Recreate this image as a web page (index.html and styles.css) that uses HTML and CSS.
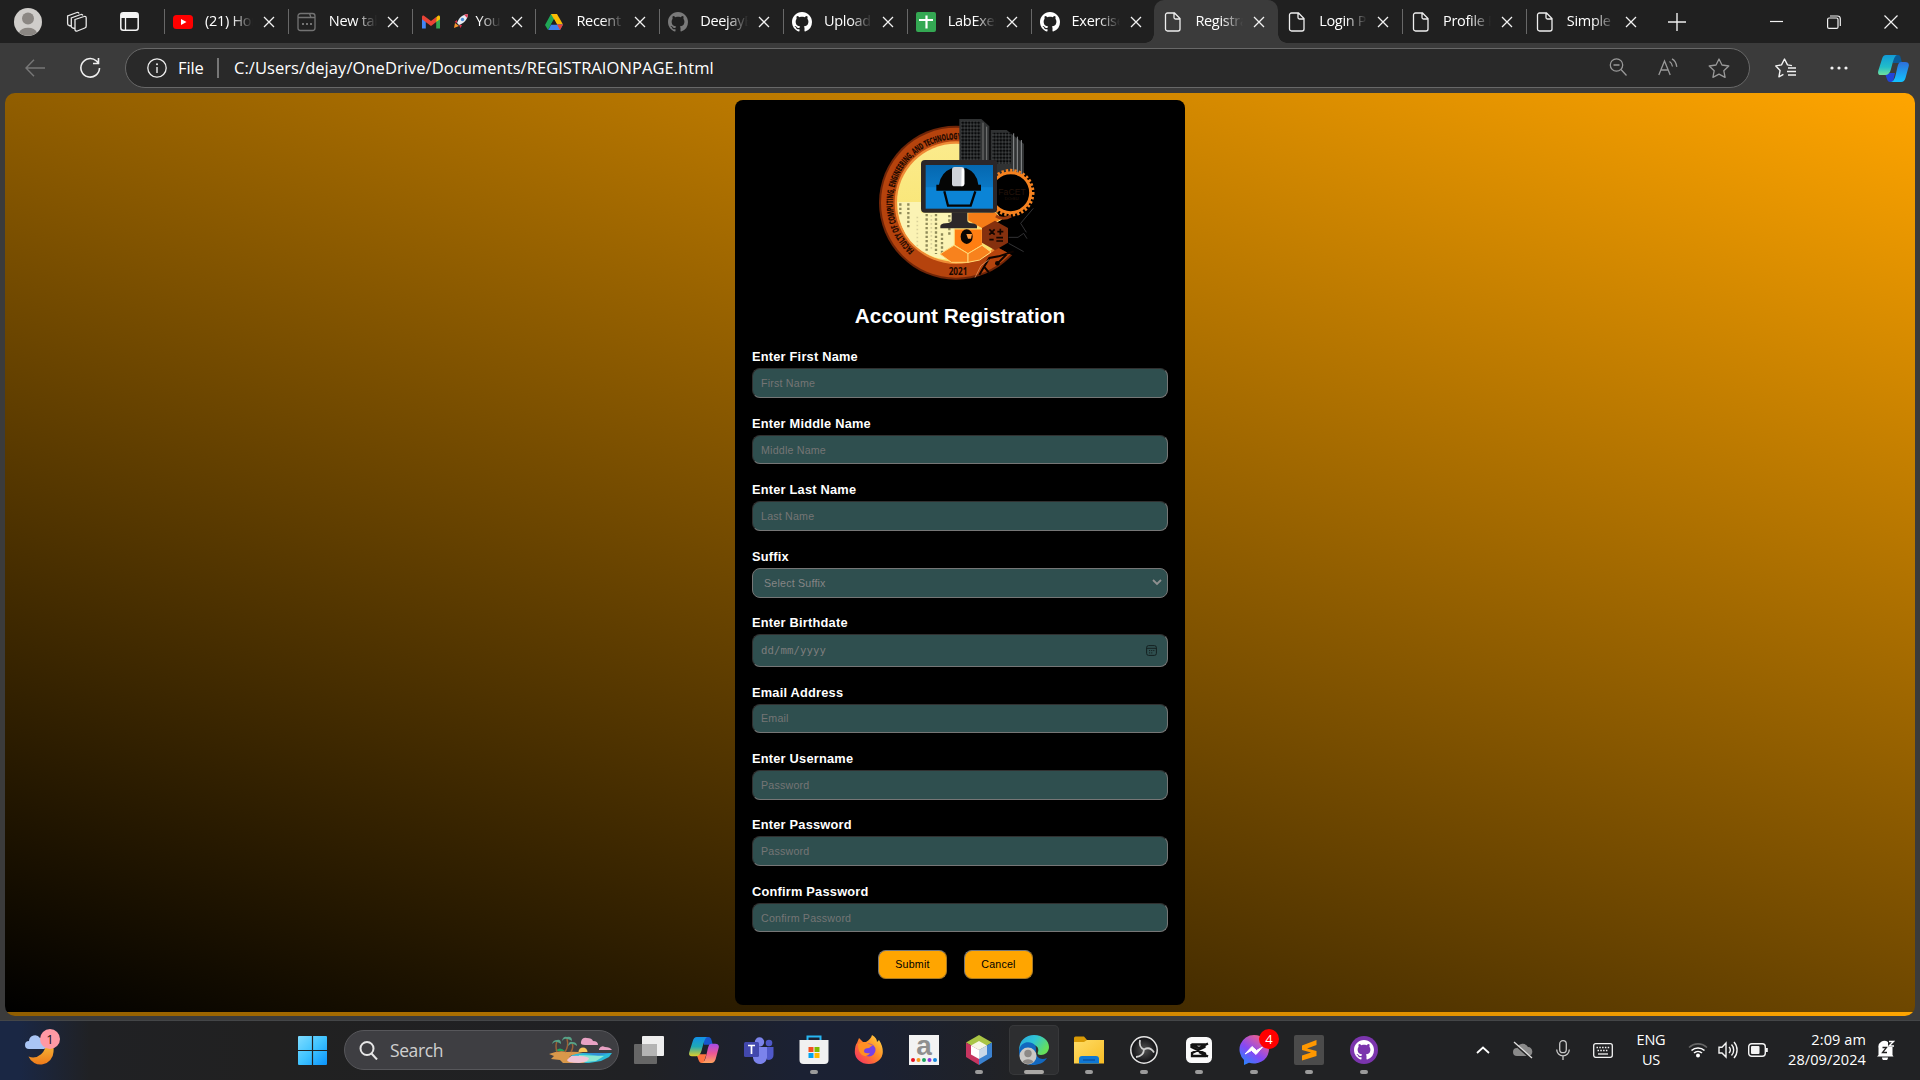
FILE: index.html
```html
<!DOCTYPE html>
<html lang="en">
<head>
<meta charset="utf-8">
<title>Registration</title>
<link rel="stylesheet" href="styles.css">
</head>
<body>
<svg class="defs" width="0" height="0">
  <defs>
    <symbol id="github" viewBox="0 0 16 16"><path d="M8 0C3.58 0 0 3.58 0 8c0 3.54 2.29 6.53 5.47 7.59.4.07.55-.17.55-.38 0-.19-.01-.82-.01-1.49-2.01.37-2.53-.49-2.69-.94-.09-.23-.48-.94-.82-1.13-.28-.15-.68-.52-.01-.53.63-.01 1.08.58 1.23.82.72 1.21 1.87.87 2.33.66.07-.52.28-.87.51-1.07-1.78-.2-3.64-.89-3.64-3.95 0-.87.31-1.59.82-2.15-.08-.2-.36-1.02.08-2.12 0 0 .67-.21 2.2.82.64-.18 1.32-.27 2-.27s1.36.09 2 .27c1.53-1.04 2.2-.82 2.2-.82.44 1.1.16 1.92.08 2.12.51.56.82 1.27.82 2.15 0 3.07-1.87 3.75-3.65 3.95.29.25.54.73.54 1.48 0 1.07-.01 1.93-.01 2.2 0 .21.15.46.55.38A8.01 8.01 0 0 0 16 8c0-4.42-3.58-8-8-8z"/></symbol>
    <symbol id="doc" viewBox="0 0 20 20"><path d="M4.5 1h7L17 6.500V17a2 2 0 0 1-2 2H4.500a2 2 0 0 1-2-2V3a2 2 0 0 1 2-2zM11 1.300V5.500a1.500 1.500 0 0 0 1.500 1.500H17" fill="none" stroke="#eee" stroke-width="1.300"/></symbol>
    <symbol id="x" viewBox="0 0 12 12"><path d="M1 1l10 10M11 1L1 11" fill="none" stroke="#f2f2f2" stroke-width="1.300"/></symbol>
    <linearGradient id="cpA" x1="0" y1="0" x2="0" y2="1"><stop offset="0" stop-color="#128fe8"/><stop offset=".5" stop-color="#1fa9b5"/><stop offset="1" stop-color="#e2cf27"/></linearGradient>
    <linearGradient id="cpB" x1="0" y1="0" x2="0" y2="1"><stop offset="0" stop-color="#a34bea"/><stop offset=".5" stop-color="#ee5795"/><stop offset="1" stop-color="#ffa45c"/></linearGradient>
    <linearGradient id="cpC" x1="0" y1="0" x2="0" y2="1"><stop offset="0" stop-color="#129bd8"/><stop offset=".6" stop-color="#21bdc9"/><stop offset="1" stop-color="#71e09c"/></linearGradient>
    <linearGradient id="cpD" x1="0" y1="0" x2="0" y2="1"><stop offset="0" stop-color="#2e6fdb"/><stop offset="1" stop-color="#12c3ff"/></linearGradient>
    <linearGradient id="win" x1="0" y1="0" x2="1" y2="1"><stop offset="0" stop-color="#7fdcff"/><stop offset=".5" stop-color="#3fc3ff"/><stop offset="1" stop-color="#0a93fb"/></linearGradient>
    <linearGradient id="moon" x1="0" y1="0" x2="0" y2="1"><stop offset="0" stop-color="#f9c23c"/><stop offset="1" stop-color="#ee7a1a"/></linearGradient>
    <linearGradient id="msg" x1="0" y1="1" x2=".7" y2="0"><stop offset="0" stop-color="#1592ff"/><stop offset=".5" stop-color="#8548f5"/><stop offset="1" stop-color="#f3618b"/></linearGradient>
    <linearGradient id="edgeT" x1="0" y1="0" x2="1" y2=".5"><stop offset="0" stop-color="#2aa5dc"/><stop offset=".5" stop-color="#2fc4d6"/><stop offset="1" stop-color="#66e05a"/></linearGradient>
    <linearGradient id="folder" x1="0" y1="0" x2="1" y2="1"><stop offset="0" stop-color="#ffdc66"/><stop offset="1" stop-color="#f8bd25"/></linearGradient>
    <linearGradient id="fox" x1="1" y1="0" x2="0" y2="1"><stop offset="0" stop-color="#ffe14a"/><stop offset=".45" stop-color="#ff8a24"/><stop offset="1" stop-color="#f5256a"/></linearGradient>
    <linearGradient id="glow" x1="0" y1="0" x2="0" y2="1"><stop offset="0" stop-color="#fbeb8c"/><stop offset="1" stop-color="#f8e36a"/></linearGradient>
    <linearGradient id="screen" x1="0" y1="0" x2="0" y2="1"><stop offset="0" stop-color="#0568b0"/><stop offset=".5" stop-color="#0a77c4"/><stop offset=".52" stop-color="#0b84d6"/><stop offset="1" stop-color="#0b84d6"/></linearGradient>
    <radialGradient id="obs"><stop offset="0" stop-color="#555"/><stop offset="1" stop-color="#17171a"/></radialGradient>
    <pattern id="windows" width="9.500" height="10.500" patternUnits="userSpaceOnUse"><rect width="9.500" height="10.500" fill="#3f4142"/><rect x="1" y="1" width="7" height="8" rx="2" fill="#08090a"/></pattern>
  </defs>
</svg>

<div class="screen">
  <header class="tabstrip">
    <div class="strip-tools">
      <span class="tool tool-avatar"><svg width="28" height="28" viewBox="0 0 28 28"><circle cx="14" cy="14" r="14" fill="#cfcdca"/><circle cx="14" cy="10.500" r="6" fill="#8b8783"/><path d="M5 24.500a9.500 7 0 0 1 18 0A14 14 0 0 1 5 24.500z" fill="#8b8783"/></svg></span>
      <span class="tool"><svg width="22" height="22" viewBox="0 0 22 22" fill="none" stroke="#e8e8e8" stroke-width="1.300"><path d="M9 8.500l9-3a1.500 1.500 0 0 1 2.200 1.400V15a2 2 0 0 1-1.400 2l-7.500 3a1.600 1.600 0 0 1-2.300-1.500zM8.500 17.500l-2-.5a2 2 0 0 1-1.200-2V7l9.500-3.500a1.500 1.500 0 0 1 2 1M5 15l-2-.5a2 2 0 0 1-1.400-2V5L11 1.500a1.500 1.500 0 0 1 2 1"/></svg></span>
      <span class="tool"><svg width="19" height="19" viewBox="0 0 19 19"><rect x=".8" y=".8" width="17.400" height="17.400" rx="2.500" fill="none" stroke="#f4f4f4" stroke-width="1.500"/><path d="M1 3a2 2 0 0 1 2-2h13a2 2 0 0 1 2 2v3H1z" fill="#f4f4f4"/><path d="M5.500 6v12" stroke="#f4f4f4" stroke-width="1.300"/></svg></span>
    </div>
    <nav class="tabs">
      <div class="tab"><svg class="fav" viewBox="0 0 20 20"><rect y="3" width="20" height="14" rx="3.500" fill="#f00"/><path d="M8 7l5.500 3L8 13z" fill="#fff"/></svg><span class="tab-title">(21) Home</span><svg class="close"><use href="#x"/></svg></div>
      <div class="tab"><svg class="fav" viewBox="0 0 20 20" fill="none" stroke="#737373" stroke-width="1.300"><path d="M3.500 1.500h9l1.500 4h4V16a2.500 2.500 0 0 1-2.500 2.500h-12A2.500 2.500 0 0 1 1 16V4a2.500 2.500 0 0 1 2.500-2.500zM1 5.500h13M12.500 1.500h3A2.500 2.500 0 0 1 18 4v2"/><path d="M5 12h2M9 12h2M13 12h2" stroke-width="2"/></svg><span class="tab-title">New tab</span><svg class="close"><use href="#x"/></svg></div>
      <div class="tab"><svg class="fav" viewBox="0 0 20 20"><path d="M1 4.500v12h3.800V8z" fill="#4285f4"/><path d="M15.200 8v8.500H19v-12z" fill="#34a853"/><path d="M15.200 5.200L17 3.700c1-.7 2 0 2 1.300v2.300L15.200 10z" fill="#fbbc04"/><path d="M1 5c0-1.300 1-2 2-1.300l7 5.300 5.200-4V10L10 14 1 7.300z" fill="#ea4335"/></svg><span class="tab-title"><svg class="rocket" viewBox="0 0 16 16"><path d="M1 15l1-5 4 3z" fill="#f8942b"/><path d="M4 7L1.500 9 4 10zM9 12l-1.500 3-1.500-3z" fill="#d9304c"/><path d="M4 10C6 5 9 1.500 15 1c-.5 6-4 9-9 11z" fill="#e6ebf2"/><path d="M11 1.800L15 1l-.8 4z" fill="#e03a55"/><circle cx="9.500" cy="6.500" r="1.700" fill="#4b8fd8"/></svg>Your</span><svg class="close"><use href="#x"/></svg></div>
      <div class="tab"><svg class="fav" viewBox="0 0 20 20"><path d="M7 2h6L7 12.500 4 18 1 13z" fill="#20a656"/><path d="M7 2h6l6 10.500h-6z" fill="#fbbc04"/><path d="M4.200 18l3-5.500H19L16 18z" fill="#3f80ef"/><path d="M13 12.500h6L16 18z" fill="#ea4335"/><path d="M10 7.200l3 5.300H7z" fill="#202020"/></svg><span class="tab-title">Recent -</span><svg class="close"><use href="#x"/></svg></div>
      <div class="tab"><svg class="fav gh-dim"><use href="#github"/></svg><span class="tab-title">DeejayB</span><svg class="close"><use href="#x"/></svg></div>
      <div class="tab"><svg class="fav gh"><use href="#github"/></svg><span class="tab-title">Upload</span><svg class="close"><use href="#x"/></svg></div>
      <div class="tab"><svg class="fav" viewBox="0 0 20 20"><rect width="20" height="20" rx="2" fill="#34a853"/><path d="M10.500 3.500v13M3 8h14" stroke="#fff" stroke-width="2.200"/></svg><span class="tab-title">LabExer</span><svg class="close"><use href="#x"/></svg></div>
      <div class="tab"><svg class="fav gh"><use href="#github"/></svg><span class="tab-title">Exercise</span><svg class="close"><use href="#x"/></svg></div>
      <div class="tab tab-active"><svg class="fav"><use href="#doc"/></svg><span class="tab-title">Registra</span><svg class="close"><use href="#x"/></svg></div>
      <div class="tab tab-bare"><svg class="fav"><use href="#doc"/></svg><span class="tab-title">Login P</span><svg class="close"><use href="#x"/></svg></div>
      <div class="tab"><svg class="fav"><use href="#doc"/></svg><span class="tab-title">Profile P</span><svg class="close"><use href="#x"/></svg></div>
      <div class="tab"><svg class="fav"><use href="#doc"/></svg><span class="tab-title">Simple</span><svg class="close"><use href="#x"/></svg></div>
    </nav>
    <div class="new-tab"><svg width="18" height="18" viewBox="0 0 18 18"><path d="M9 0v18M0 9h18" stroke="#eee" stroke-width="1.400"/></svg></div>
    <div class="window-controls">
      <span><svg width="13" height="13"><path d="M0 6.500h13" stroke="#f2f2f2" stroke-width="1.200"/></svg></span>
      <span><svg width="14" height="14" fill="none" stroke="#f2f2f2" stroke-width="1.200"><rect x=".6" y="3" width="10.400" height="10.400" rx="1.500"/><path d="M3 1h7.500A2.800 2.800 0 0 1 13.300 3.800V11"/></svg></span>
      <span><svg width="14" height="14"><path d="M.5 .5l13 13M13.500 .5l-13 13" stroke="#f2f2f2" stroke-width="1.200"/></svg></span>
    </div>
  </header>

  <div class="toolbar">
    <span class="tb-back"><svg width="20" height="18" viewBox="0 0 20 18" fill="none" stroke="#777" stroke-width="1.400"><path d="M20 9H1M9 .8L1 9l8 8.200"/></svg></span>
    <span class="tb-reload"><svg width="22" height="22" viewBox="0 0 22 22" fill="none" stroke="#f0f0f0" stroke-width="1.600"><path d="M20.500 11a9.300 9.300 0 1 1-3-7L19.300 6M19.500 1v5.500H14"/></svg></span>
    <div class="address">
      <svg class="info" viewBox="0 0 20 20"><circle cx="10" cy="10" r="9.200" fill="none" stroke="#eee" stroke-width="1.300"/><path d="M10 9v6" stroke="#eee" stroke-width="1.400"/><circle cx="10" cy="6.200" r="1" fill="#eee"/></svg>
      <span class="scheme">File</span>
      <span class="bar"></span>
      <span class="url">C:/Users/dejay/OneDrive/Documents/REGISTRAIONPAGE.html</span>
      <div class="address-actions">
        <span><svg width="18" height="18" viewBox="0 0 18 18" fill="none" stroke="#999" stroke-width="1.300"><circle cx="7.500" cy="7" r="6.200"/><path d="M12 11.500l5.500 6M4.500 7h6"/></svg></span>
        <span><svg width="20" height="18" viewBox="0 0 20 18" fill="none" stroke="#999" stroke-width="1.300"><path d="M.8 17L6.500 3l5.700 14M2.800 12h7.400M11.500 3.500q2.500 1.500 3 5M14 .8q4 2 4.800 8"/></svg></span>
        <span><svg width="22" height="20" viewBox="0 0 22 20" fill="none" stroke="#999" stroke-width="1.300"><path d="M11 1l3 6 6.800 1-5 4.700 1.300 6.600L11 16.200l-6.100 3.100 1.300-6.600-5-4.700L8 7z" stroke-linejoin="round"/></svg></span>
      </div>
    </div>
    <div class="toolbar-actions">
      <span><svg width="21" height="20" viewBox="0 0 21 20" fill="none" stroke="#f2f2f2" stroke-width="1.400" stroke-linejoin="round"><path d="M17 7.600l-4.500-.7L9.500 1l-3 5.900L.8 7.900l4.300 4.500-1.200 6.400 4.500-2.400M13 10h8M12 13.500h9M13 17h8"/></svg></span>
      <span><svg width="18" height="4"><circle cx="2" cy="2" r="1.600" fill="#f2f2f2"/><circle cx="9" cy="2" r="1.600" fill="#f2f2f2"/><circle cx="16" cy="2" r="1.600" fill="#f2f2f2"/></svg></span>
      <span><svg width="31" height="27" viewBox="0 0 31 27"><path d="M15 0h5c2 0 2.500 2 3 4l1 4h-9z" fill="#0a5a97"/><path d="M7 18h10l-2 9h-3c-3 0-3-4-5-8z" fill="#2144d8"/><path d="M8 0h11c-3 1-4 7-6 14-1 4-3 6-6 6H3c-3 0-3.500-2-2.500-5L4 4c.7-2.500 2-4 4-4z" fill="url(#cpC)"/><path d="M23 7h4c3.500 0 4.500 2 3.500 5l-3 11c-.8 2.500-2 4-4.500 4h-10c4-1 4.500-7 6-13 1-4 1.500-7 4-7z" fill="url(#cpD)"/></svg></span>
    </div>
  </div>

  <main class="viewport">
    <form class="card">
      <svg class="logo" viewBox="0 0 600 600" width="200" height="200">
        <clipPath id="ringClip"><path d="M0 0h300v240h90v190l78 42-60 80-60 48H0z"/></clipPath>
        <g clip-path="url(#ringClip)">
          <circle cx="288" cy="308" r="231" fill="#6f2508"/>
          <circle cx="288" cy="308" r="225" fill="#b5430d"/>
          <circle cx="288" cy="308" r="184" fill="#ef8a35"/>
          <circle cx="288" cy="308" r="177" fill="url(#glow)"/>
        </g>
        <path d="M113 306h71v32h100v138q-40 6-75-10-95-45-96-160z" fill="#fbf3b4"/>
        <path d="M121 310v35M145 310v78M200 342v110M228 342v120M246 400v62M268 345v65" stroke="#8f8a58" stroke-width="7" stroke-dasharray="7 6"/>
        <path d="M172 350v90M214 345v105" stroke="#d9d19a" stroke-width="5" stroke-dasharray="5 7"/>
        <path id="ringPath" d="M163 451A190 190 0 0 1 310 119.300" fill="none"/>
        <text class="ring-text"><textPath href="#ringPath" textLength="474" lengthAdjust="spacingAndGlyphs">FACULTY OF COMPUTING, ENGINEERING, AND TECHNOLOGY</textPath></text>
        <text class="year" x="294" y="525" text-anchor="middle" textLength="56" lengthAdjust="spacingAndGlyphs">2021</text>
        <path d="M298 57h66l24 22v120h-90z" fill="#303233"/><rect x="303" y="64" width="58" height="118" fill="url(#windows)"/><path d="M369 68v130M380 80v120" stroke="#777" stroke-width="3"/>
        <path d="M392 90h48l52 42v120h-100z" fill="#303233"/><rect x="396" y="98" width="57" height="94" fill="url(#windows)"/><path d="M461 100v120M472 110v120M484 120v120" stroke="#909294" stroke-width="3"/>
        <circle cx="452" cy="278" r="60" fill="#000" stroke="#f58220" stroke-width="9"/>
        <circle cx="452" cy="278" r="67" fill="none" stroke="#f58220" stroke-width="9" stroke-dasharray="7 6"/>
        <text x="456" y="284" text-anchor="middle" class="facet">FaCET</text><text x="455" y="301" text-anchor="middle" class="facet-sub">DOrSU</text>
        <g stroke="#ffd978" stroke-width="3">
          <path d="M323 338l84-2 18 22-55 30-47-26z" fill="#f47c17"/>
          <path d="M283 387h84v48l-43 26-41-26z" fill="#ff7e12"/>
          <path d="M240 462l42-26 42 25v26h-50z" fill="#f8821d"/>
          <path d="M324 461l42-25 27 20-34 24-35 7z" fill="#f8821d"/>
        </g>
        <ellipse cx="320" cy="410" rx="18" ry="22" fill="#0b0502"/><path d="M319 402h17l-3 14h-9z" fill="#ff9a3e"/>
        <path d="M405 362l39 22v44l-39 23-39-23v-44z" fill="#85300e"/>
        <path d="M388 388l16 16m0-16l-16 16M412 395h18M421 386v18M388 419h13M409 413h20M409 423h20" stroke="#120500" stroke-width="5"/>
        <path d="M408 348q22 14 45 0" fill="none" stroke="#9e3b0d" stroke-width="9"/>
        <path d="M446 412h28l17-12 10 16M520 325l-38 45 17 27M446 430l45 25" fill="none" stroke="#3c3c3e" stroke-width="2.500"/>
        <path d="M358 524l30-50 28-5 45-15M412 491l35-35M372 500l17 20" fill="none" stroke="#100400" stroke-width="6"/><circle cx="412" cy="490" r="7" fill="#100400"/><path d="M345 533l18-36 24-18" fill="none" stroke="#e9a36d" stroke-width="2"/>
        <rect x="183" y="180" width="228" height="158" rx="12" fill="#2b2729"/><rect x="197" y="195" width="202" height="131" fill="url(#screen)"/>
        <path d="M275 337h47v24q0 8 12 9 17 1 17 9v6H241v-6q0-8 16-9 18-1 18-9z" fill="#2b2729"/>
        <path d="M229 272v-18h8q5-36 38-49h44q32 13 36 49h8v18z" fill="#050505"/>
        <path d="M253 274l11 43h68l14-43" fill="none" stroke="#050505" stroke-width="7"/><rect x="276" y="201" width="37" height="58" rx="8" fill="#cfd2d8"/><path d="M305 205q8 0 8 10v35q0 8-9 9z" fill="#fff"/>
      </svg>
      <h2 class="title">Account Registration</h2>
      <div class="field"><label>Enter First Name</label><div class="input">First Name</div></div>
      <div class="field"><label>Enter Middle Name</label><div class="input">Middle Name</div></div>
      <div class="field"><label>Enter Last Name</label><div class="input">Last Name</div></div>
      <div class="field"><label>Suffix</label><div class="input select">Select Suffix<svg width="10" height="7" viewBox="0 0 10 7"><path d="M1 1l4 4 4-4" fill="none" stroke="#909090" stroke-width="1.800"/></svg></div></div>
      <div class="field"><label>Enter Birthdate</label><div class="input date">dd/mm/yyyy<svg width="11" height="11" viewBox="0 0 11 11"><rect x=".6" y=".6" width="9.800" height="9.800" rx="2" fill="none" stroke="#142020"/><path d="M.6 3.300h9.800" stroke="#142020"/><path d="M3 5.600h5.500M3 7.900h4" stroke="#142020" stroke-dasharray="1.200 .9"/></svg></div></div>
      <div class="field"><label>Email Address</label><div class="input">Email</div></div>
      <div class="field"><label>Enter Username</label><div class="input">Password</div></div>
      <div class="field"><label>Enter Password</label><div class="input">Password</div></div>
      <div class="field"><label>Confirm Password</label><div class="input">Confirm Password</div></div>
      <div class="actions"><button type="button">Submit</button><button type="button">Cancel</button></div>
    </form>
  </main>

  <footer class="taskbar">
    <div class="weather"><svg width="36" height="36" viewBox="0 0 36 36"><path d="M20 11a12.500 12.500 0 0 1-16.500 14.500A13 13 0 0 0 28.500 21 13 13 0 0 0 25 10z" fill="url(#moon)"/><path d="M4 18a4 4 0 0 1 0-8 6 6 0 0 1 11-3 5.500 5.500 0 0 1 4 11z" fill="#a9c5f5"/></svg><span class="badge badge-pink">1</span></div>
    <div class="start"><svg width="29" height="29" viewBox="0 0 29 29" fill="url(#win)"><path d="M0 1a1 1 0 0 1 1-1h12.900v13.900H0zM15.100 0H28a1 1 0 0 1 1 1v12.900H15.100zM0 15.100h13.900V29H1a1 1 0 0 1-1-1zM15.100 15.100H29V28a1 1 0 0 1-1 1H15.100z"/></svg></div>
    <div class="search">
      <svg class="lens" width="19" height="19" viewBox="0 0 19 19" fill="none" stroke="#e6e6e6" stroke-width="2"><circle cx="8" cy="7.500" r="6.500"/><path d="M12.500 12.500l5.500 6"/></svg>
      <span>Search</span>
      <svg class="island" width="64" height="28" viewBox="0 0 64 28">
        <path d="M24 17h39l-3 4-8 4-12 2H18z" fill="#2bbad8"/><path d="M35 17h26l-12 3z" fill="#328fd3"/><path d="M30 19l25 1-8 5-20 2z" fill="#8be8d0"/>
        <path d="M0 18q10-4 18-2 9-1 16 1-16 2-13 5 6 2 16 5H14l-3-3-9-1 3-3z" fill="#d9984a"/><path d="M22 20q12-1 18 2 0 4-10 5-12 0-12-3z" fill="#f0c3d5"/>
        <path d="M29.500 16a4.500 4.500 0 0 1 9 0z" fill="#f8c65a"/><path d="M6 15q5-5 10 0z" fill="#23a35a"/>
        <path d="M8 16Q6 10 8 5M16 16q4-6 2-13M22 16q3-5 1-9" fill="none" stroke="#9c6237" stroke-width="1.500"/>
        <path d="M3 8q1-4 5-4 4-1 4 4-3-2-4-2-2-1-5 2zM13 5q1-5 5-4 5-1 5 4-3-2-5-2-3-1-5 2zM19 10q1-5 4-4 5 0 5 4-3-2-4-2-2-1-5 2z" fill="#58a287"/>
        <path d="M32 6q1-5 6-4 5 0 6 3 5 0 5 4H36q-5 0-4-3zM50 13q2-4 6-2 5 0 7 3H50z" fill="#e8a2c4"/>
      </svg>
    </div>
    <div class="apps">
      <span class="app"><svg viewBox="0 0 30 30"><rect x="8" y="1" width="22" height="20" rx="1" fill="#eee"/><rect y="9" width="23" height="20" rx="1" fill="#666"/><path d="M8 9h15v12H8z" fill="#b4b4b4"/></svg></span>
      <span class="app"><svg viewBox="0 0 31 29"><path d="M14 1h6c2 0 3 2 3.500 4l1 4h-9z" fill="#1756cc"/><path d="M7 19h11l-3 9h-2c-3 0-3-4-5-8z" fill="#ff7340"/><path d="M8 1h11c-3 1-4 7-6 14-1 4-3 6-6 6H3c-3 0-3.500-2-2.500-5L4 5c.7-2.500 2-4 4-4z" fill="url(#cpA)"/><path d="M23 8h4c3.500 0 4.500 2 3.500 5l-3 11c-.8 2.500-2 4-4.500 4h-10c4-1 4.500-7 6-13 1-4 1.500-7 4-7z" fill="url(#cpB)"/></svg></span>
      <span class="app"><svg viewBox="0 0 30 30"><circle cx="15.500" cy="7" r="4.700" fill="#7b83eb"/><circle cx="25" cy="8" r="3.300" fill="#5059c9"/><path d="M18 12h11.500v8q0 5-6 5z" fill="#5059c9"/><path d="M9 12h14v9a7 7 0 0 1-14 2z" fill="#7b83eb"/><rect y="7" width="15" height="15" rx="1.500" fill="#4248ad"/><path d="M4 10.500h7M7.500 10.500v8.500" stroke="#fff" stroke-width="1.700"/></svg></span>
      <span class="app running"><svg viewBox="0 0 30 30"><path d="M8.500 6V1.600h13V6" fill="none" stroke="#27b6f2" stroke-width="2"/><path d="M.5 5h29v20a4 4 0 0 1-4 4h-21a4 4 0 0 1-4-4z" fill="#f1f1f1"/><path d="M9.500 12h5v5h-5z" fill="#f25022"/><path d="M15.500 12h5v5h-5z" fill="#7fba00"/><path d="M9.500 18h5v5h-5z" fill="#00a4ef"/><path d="M15.500 18h5v5h-5z" fill="#ffb900"/></svg></span>
      <span class="app"><svg viewBox="0 0 30 30"><path d="M5 3l4 4h3Q17 4 18 0q5 3 5 7l2-2q4 6 3.800 12a14 12 0 0 1-28 0Q1 10 3 8z" fill="url(#fox)"/><circle cx="15" cy="15" r="6.500" fill="#7542e5"/><path d="M4 9q5-3 11 0l4 1-4 3q-5 0-5 3 0 3 6 2-3 5-8 2-4-3-4-11z" fill="#ff8f24"/></svg></span>
      <span class="app"><svg viewBox="0 0 30 30"><rect width="30" height="30" fill="#f3f3f3"/><text class="letter-a" x="15" y="19.500" text-anchor="middle">a</text><g><circle cx="4" cy="25" r="2" fill="#e8121f"/><circle cx="9.500" cy="25" r="2" fill="#f79a1c"/><circle cx="15" cy="25" r="2" fill="#1aa260"/><circle cx="20.500" cy="25" r="2" fill="#8b37d6"/><circle cx="26" cy="25" r="2" fill="#1389df"/></g></svg></span>
      <span class="app running"><svg viewBox="0 0 30 30"><path d="M15 0l13 7.500-13 7.500L2 7.500z" fill="#a9c545"/><path d="M2 7.500l13 7.500v15L2 22z" fill="#c63560"/><path d="M28 7.500L15 15v15l13-8z" fill="#3b82d0"/><path d="M15 6l8 4.500-8 4.500-8-4.500z" fill="#f6f6e6"/><path d="M7 10.500l8 4.500v9l-8-4.500z" fill="#fff"/><path d="M23 10.500L15 15v9l8-4.500z" fill="#ccd9e8"/></svg></span>
      <span class="app running app-active"><svg viewBox="0 0 30 30"><path d="M0 16C0 5 7 0 15 0c9 0 15 6 15 12 0 5-4 8-8 8-3 0-4-1-3-3 2-6-5-9-10-7q-6 1-9 6z" fill="url(#edgeT)"/><path d="M0 16C1 8 8 6 13 8c7 3 2 8 5 13 2 3 6 4 10 2-3 5-9 7-14 7C5 30 0 24 0 16z" fill="#1268bf"/><circle cx="9" cy="21" r="8.500" fill="#cbc9c6"/><circle cx="9" cy="18.500" r="3.700" fill="#8d8986"/><path d="M3.500 27a6 4.500 0 0 1 11 0 8.500 8.500 0 0 1-11 0z" fill="#8d8986"/></svg></span>
      <span class="app running"><svg viewBox="0 0 30 30"><path d="M0 3a1.500 1.500 0 0 1 1.500-1.500H10L13 5h10v8H0z" fill="#d99a05"/><path d="M0 7h10l3-2h17v23.500H0z" fill="url(#folder)"/><path d="M5 28.500V24a3 3 0 0 1 3-3h14a3 3 0 0 1 3 3v4.500z" fill="#0f78d4"/><path d="M9 25h12" stroke="#0a4f9e" stroke-width="1.300"/></svg></span>
      <span class="app running"><svg viewBox="0 0 30 30"><circle cx="15" cy="15" r="13.200" fill="#19191c" stroke="#e5e5e5" stroke-width="1.500"/><circle cx="15" cy="15" r="11.500" fill="url(#obs)"/><path d="M15 14.500Q9.500 12 11 5M15 14.500q6-3.500 10 3M15 14.500q-.5 7-8 7.500" fill="none" stroke="#cfcfcf" stroke-width="1.800"/></svg></span>
      <span class="app running"><svg viewBox="0 0 30 30"><rect x="2" y="2" width="26" height="26" rx="5.500" fill="#fafafa"/><path d="M24 8.500L15 13 7.500 9.500h13V12L8 18v3h13v-2.500L7.500 12V9M15 17l9 4.500" fill="none" stroke="#111" stroke-width="2.300"/></svg></span>
      <span class="app running"><svg viewBox="0 0 30 30"><path d="M15 0a15 14.300 0 1 1-5 27.800L5 30v-5A14.500 14.500 0 0 1 15 0z" fill="url(#msg)"/><path d="M6 19l7-7.500 4.500 4 6-3.500-6.500 7.500-4.500-4z" fill="#fff" stroke="#fff"/></svg><span class="badge badge-red">4</span></span>
      <span class="app running"><svg viewBox="0 0 30 30"><rect width="30" height="30" rx="2" fill="#4b4b4b"/><path d="M8 10.500L22.500 5v5L13 13.500l9.500 2.500v5L8 25.500v-5l9-3-9-2.500z" fill="#ff9800"/></svg></span>
      <span class="app running"><svg viewBox="0 0 30 30"><circle cx="15" cy="15" r="14" fill="#7b35ad"/><svg x="5" y="5" width="20" height="20" fill="#fff"><use href="#github"/></svg></svg></span>
    </div>
    <div class="tray">
      <span class="tray-icon"><svg width="14" height="8"><path d="M1 7l6-5.500L13 7" fill="none" stroke="#fff" stroke-width="1.800"/></svg></span>
      <span class="tray-icon"><svg width="20" height="18" viewBox="0 0 20 18"><path d="M4 15a4 4 0 0 1 0-8 6 6 0 0 1 11-1 4.600 4.600 0 0 1 1 9z" fill="#8a8a8a"/><path d="M1 2.500l17 15" stroke="#242424" stroke-width="2"/><path d="M1 1l18 16" stroke="#e0e0e0" stroke-width="1.300"/></svg></span>
      <span class="tray-icon"><svg width="14" height="20" fill="none" stroke="#c8c8c8" stroke-width="1.300"><rect x="3.700" y=".7" width="6.600" height="12" rx="3.300"/><path d="M.7 9.500a6.300 6.300 0 0 0 12.600 0M7 16v4"/></svg></span>
      <span class="tray-icon"><svg width="20" height="15" fill="none" stroke="#f4f4f4" stroke-width="1.300"><rect x=".7" y=".7" width="18.600" height="13.600" rx="2"/><path d="M3.500 4.500h13M4.500 7.500h11" stroke-dasharray="1.500 1.300" stroke-width="1.500"/><path d="M5 11h10"/></svg></span>
      <span class="lang"><span>ENG</span><span>US</span></span>
      <span class="tray-icon slim"><svg width="20" height="16" viewBox="0 0 20 16" fill="none" stroke-width="1.600"><path d="M1 5.500a13 13 0 0 1 18 0" stroke="#666"/><path d="M3.500 8.500a9.500 9.500 0 0 1 13 0M6 11a6 6 0 0 1 8 0" stroke="#fff"/><circle cx="10" cy="13.500" r="2" fill="#fff"/></svg></span>
      <span class="tray-icon slim"><svg width="20" height="18" viewBox="0 0 20 18" fill="none" stroke="#f4f4f4" stroke-width="1.400"><path d="M1 6.200h3L8 2v14l-4-4H1zM11 6a4 4 0 0 1 0 6M13.500 3.500a8 8 0 0 1 0 11M16 1a12 12 0 0 1 0 16"/></svg></span>
      <span class="tray-icon slim"><svg width="20" height="14" viewBox="0 0 20 14"><rect x=".7" y=".7" width="16.600" height="12.600" rx="3" fill="none" stroke="#f4f4f4" stroke-width="1.400"/><rect x="3" y="3" width="8.500" height="8" rx="1" fill="#f4f4f4"/><path d="M18.800 5v4" stroke="#f4f4f4" stroke-width="2"/></svg></span>
      <span class="clock"><span>2:09 am</span><span>28/09/2024</span></span>
      <span class="bell"><svg width="18" height="20" viewBox="0 0 18 20"><path d="M1.500 15V8a6 6 0 0 1 9.500-6v5h4.500v8l1 1.500H0zM5 17.500h6a3 3 0 0 1-6 0z" fill="#fff"/><path d="M5.500 7.500h4l-4 5h4.500" fill="none" stroke="#222" stroke-width="1.300"/><path d="M12 1.500h4.500l-4.500 4.500h5" fill="none" stroke="#fff" stroke-width="1.400"/></svg></span>
    </div>
  </footer>
</div>
</body>
</html>
```

FILE: styles.css
```css
* { box-sizing: border-box; }
body { margin: 0; background: #3b3b3b; font-family: "Open Sans", "Noto Sans", sans-serif; color: #fff; }
svg { display: block; flex: none; }
.defs { position: absolute; }
.screen { width: 1920px; height: 1080px; display: flex; flex-direction: column; overflow: hidden; background: #3b3b3b; }

/* tab strip */
.tabstrip { height: 43px; flex: none; display: flex; background: #202020; }
.strip-tools { width: 164px; display: flex; align-items: center; }
.tool { width: 52px; height: 43px; display: flex; align-items: center; justify-content: center; }
.tool-avatar { width: 54px; margin-right: -3px; padding-left: 2px; }
.tabs { display: flex; }
.tab { width: 123.8px; height: 43px; display: flex; align-items: center; padding-left: 9px; position: relative; }
.tab::before { content: ""; position: absolute; left: 0; top: 9px; width: 1px; height: 25px; background: #686868; }
.tab-active { background: #3b3b3b; border-radius: 10px 10px 0 0; }
.tab-active::before, .tab-active::after { content: ""; position: absolute; top: auto; bottom: 0; width: 9px; height: 9px; }
.tab-active::before { left: -9px; background: radial-gradient(circle at 0 0, transparent 8.5px, #3b3b3b 9px); }
.tab-active::after { right: -9px; background: radial-gradient(circle at 100% 0, transparent 8.5px, #3b3b3b 9px); }
.tab-bare::before { display: none; }
.fav { width: 20px; height: 20px; margin-right: 12px; }
.gh { fill: #fff; }
.gh-dim { fill: #7a7a7a; }
.tab-title { width: 48px; height: 22px; margin-top: -2px; display: flex; align-items: center; overflow: hidden; white-space: nowrap; font-size: 14.5px; letter-spacing: -.3px; -webkit-mask-image: linear-gradient(90deg, #000 55%, transparent); mask-image: linear-gradient(90deg, #000 55%, transparent); }
.rocket { width: 16px; height: 16px; margin-right: 7px; }
.close { width: 12px; height: 12px; margin-left: 10px; margin-top: 1px; }
.new-tab { width: 54px; display: flex; align-items: center; justify-content: center; }
.window-controls { margin-left: auto; display: flex; }
.window-controls span { width: 57.5px; display: flex; align-items: center; justify-content: center; }

/* toolbar */
.toolbar { height: 50px; flex: none; display: flex; align-items: center; background: #3b3b3b; }
.tb-back { width: 70px; display: flex; justify-content: center; }
.tb-reload { width: 40px; display: flex; justify-content: center; margin-right: 15px; }
.address { width: 1625px; height: 40px; display: flex; align-items: center; border: 1px solid #686868; border-radius: 20px; background: #292929; padding-left: 21px; font-size: 16.5px; }
.info { width: 20px; height: 20px; margin-right: 11px; }
.scheme { width: 39px; margin-top: -2px; letter-spacing: -.1px; }
.bar { width: 2px; height: 20px; background: #777; margin-right: 15px; }
.url { margin-top: -2px; white-space: nowrap; letter-spacing: .06px; }
.address-actions { margin-left: auto; display: flex; padding-right: 5px; }
.address-actions span { width: 50.5px; display: flex; justify-content: center; }
.toolbar-actions { display: flex; align-items: center; padding-left: 8px; }
.toolbar-actions span { width: 54px; display: flex; justify-content: center; }

/* page */
.viewport { height: 923px; flex: none; margin: 0 5px; padding-top: 7px; border-radius: 10px; background: linear-gradient(20deg, #000, #ffa500) 0 0 / 100% 919px; font-family: "Liberation Sans", Arial, sans-serif; }
.card { width: 450px; height: 905px; margin: 0 auto; padding: 0 17px; background: #000; border-radius: 8px; display: flex; flex-direction: column; }
.logo { align-self: center; margin-left: -1px; }
.ring-text { font: 700 26px "Open Sans", sans-serif; fill: #180700; stroke: #180700; stroke-width: .8px; }
.year { font: 700 34px "Open Sans", sans-serif; fill: #180700; }
.facet { font: 26px "Liberation Sans", sans-serif; fill: #25140b; }
.facet-sub { font: 13px "Liberation Sans", sans-serif; fill: #25140b; }
.title { margin: 3px 0 19.400px; height: 26px; line-height: 26px; font-size: 20.8px; text-align: center; }
.field { display: flex; flex-direction: column; margin-bottom: 16.8px; }
.field label { height: 16px; line-height: 17px; font-size: 12.8px; letter-spacing: .22px; font-weight: 700; margin-bottom: 4px; }
.input { height: 29.6px; display: flex; align-items: center; justify-content: space-between; padding: 0 8px; border: 1px solid; border-color: #303030 #767676 #767676 #303030; border-radius: 8px; background: #2f4f4f; color: #757575; font-size: 10.67px; letter-spacing: .2px; }
.select { height: 30.4px; margin-bottom: -.8px; padding: 0 5px 0 11px; border-color: #767676; color: #858585; }
.date { height: 32.8px; padding-right: 10px; font: 10.67px "DejaVu Sans Mono", "Liberation Mono", monospace; letter-spacing: .08px; color: #7d7d7d; }
.actions { display: flex; gap: 17px; margin-left: 126px; margin-top: .4px; }
.actions button { width: 69px; height: 29px; padding: 0; border: 1px solid; border-color: #767676 #a87a25 #a87a25 #767676; border-radius: 8px; background: #ffa500; color: #000; font: 10.67px "Liberation Sans", Arial, sans-serif; letter-spacing: .2px; }

/* taskbar */
.taskbar { height: 60px; margin-top: 4px; padding-bottom: 1px; flex: none; display: flex; align-items: center; border-top: 1px solid #444648; background: linear-gradient(90deg, #1a2744 0, #1a2744 20px, #202124 90px, #212121 270px, #202124 640px, #1b2133 800px, #1b2132 880px, #212224 1020px, #212224 100%); }
.weather { width: 292px; height: 58px; padding: 10px 0 0 25px; position: relative; }
.badge { position: absolute; display: flex; align-items: center; justify-content: center; width: 20px; height: 20px; border-radius: 50%; font-size: 13px; }
.badge-pink { left: 40px; top: 8px; background: #ff99a4; color: #111; }
.start { width: 40px; display: flex; justify-content: center; margin-right: 12px; }
.search { width: 275px; height: 40px; display: flex; align-items: center; padding: 0 5px 0 14px; border: 1px solid #57575b; border-radius: 20px; background: #3e3e42; font-size: 17.5px; letter-spacing: -.4px; color: #d0d0d0; }
.lens { margin-right: 12px; }
.island { margin-left: auto; }
.apps { display: flex; margin-left: 2.5px; height: 50px; }
.app { width: 50px; margin: 0 2.5px; height: 50px; display: flex; justify-content: center; padding-top: 10px; position: relative; }
.app > svg { width: 30px; height: 30px; }
.running::after { content: ""; position: absolute; left: 21px; bottom: 1px; width: 8px; height: 4px; border-radius: 2px; background: #9b9b9b; }
.app-active { background: #2d2e30; border-radius: 5px; box-shadow: inset 0 0 0 1px #37383a; }
.app-active::after { left: 15px; width: 20px; background: #aaa8a5; }
.badge-red { right: 0; top: 4px; background: #f00; }
.letter-a { font: 700 28px "Liberation Sans", sans-serif; fill: #8f8f8f; }
.tray { margin-left: auto; display: flex; align-items: center; padding-right: 16px; font-size: 14.5px; letter-spacing: -.2px; line-height: 20px; }
.tray-icon { width: 40px; display: flex; justify-content: center; }
.slim { width: 30px; }
.lang { width: 56px; margin-right: 4px; display: flex; flex-direction: column; align-items: center; }
.clock { width: 93px; display: flex; flex-direction: column; align-items: flex-end; white-space: nowrap; letter-spacing: .1px; }
.bell { width: 38px; padding-left: 2px; display: flex; justify-content: center; }
```
